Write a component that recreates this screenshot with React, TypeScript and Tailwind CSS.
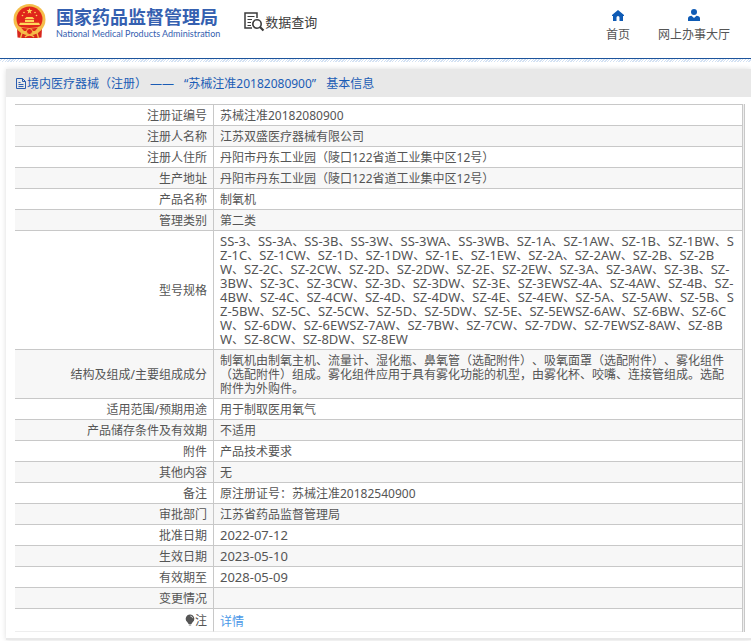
import { Fragment } from 'react';
import type { ReactNode } from 'react';

interface InfoRow {
  label: string;
  value: ReactNode;
}

const MODELS = [
  'SS-3、SS-3A、SS-3B、SS-3W、SS-3WA、SS-3WB、SZ-1A、SZ-1AW、SZ-1B、SZ-1BW、S',
  'Z-1C、SZ-1CW、SZ-1D、SZ-1DW、SZ-1E、SZ-1EW、SZ-2A、SZ-2AW、SZ-2B、SZ-2B',
  'W、SZ-2C、SZ-2CW、SZ-2D、SZ-2DW、SZ-2E、SZ-2EW、SZ-3A、SZ-3AW、SZ-3B、SZ-',
  '3BW、SZ-3C、SZ-3CW、SZ-3D、SZ-3DW、SZ-3E、SZ-3EWSZ-4A、SZ-4AW、SZ-4B、SZ-',
  '4BW、SZ-4C、SZ-4CW、SZ-4D、SZ-4DW、SZ-4E、SZ-4EW、SZ-5A、SZ-5AW、SZ-5B、S',
  'Z-5BW、SZ-5C、SZ-5CW、SZ-5D、SZ-5DW、SZ-5E、SZ-5EWSZ-6AW、SZ-6BW、SZ-6C',
  'W、SZ-6DW、SZ-6EWSZ-7AW、SZ-7BW、SZ-7CW、SZ-7DW、SZ-7EWSZ-8AW、SZ-8B',
  'W、SZ-8CW、SZ-8DW、SZ-8EW',
].join('\n');

const STRUCTURE = [
  '制氧机由制氧主机、流量计、湿化瓶、鼻氧管（选配附件）、吸氧面罩（选配附件）、雾化组件',
  '（选配附件）组成。雾化组件应用于具有雾化功能的机型，由雾化杯、咬嘴、连接管组成。选配',
  '附件为外购件。',
].join('\n');

// codes are set one step larger than the Chinese separators
function ModelList({ text }: { text: string }) {
  return (
    <div className="-mt-px pb-px text-[13px] leading-[14px] whitespace-pre">
      {text.split('、').map((code, i) => (
        <Fragment key={i}>
          {i > 0 && <span className="text-xs leading-none">、</span>}
          {code}
        </Fragment>
      ))}
    </div>
  );
}

function DateText({ children }: { children: string }) {
  return <div className="-mt-px pb-px text-[13px] leading-[14px]">{children}</div>;
}

function BulbIcon() {
  return (
    <svg viewBox="0 0 10 12" className="inline-block h-3 w-2.5 align-[-1px]" aria-hidden="true">
      <path d="M5 .5a4.300 4.300 0 0 0-2.600 7.700L3.600 10h2.800l1.200-1.800A4.300 4.300 0 0 0 5 .5Z" fill="#555" />
      <path d="M3.800 10.500h2.400v1H3.800z" fill="#777" />
      <path d="M5.400 2.100c1.300.1 2 .9 2.100 2" fill="none" stroke="#fff" strokeWidth=".8" />
    </svg>
  );
}

const ROWS: InfoRow[] = [
  { label: '注册证编号', value: '苏械注准20182080900' },
  { label: '注册人名称', value: '江苏双盛医疗器械有限公司' },
  { label: '注册人住所', value: '丹阳市丹东工业园（陵口122省道工业集中区12号）' },
  { label: '生产地址', value: '丹阳市丹东工业园（陵口122省道工业集中区12号）' },
  { label: '产品名称', value: '制氧机' },
  { label: '管理类别', value: '第二类' },
  { label: '型号规格', value: <ModelList text={MODELS} /> },
  { label: '结构及组成/主要组成成分', value: <div className="whitespace-pre">{STRUCTURE}</div> },
  { label: '适用范围/预期用途', value: '用于制取医用氧气' },
  { label: '产品储存条件及有效期', value: '不适用' },
  { label: '附件', value: '产品技术要求' },
  { label: '其他内容', value: '无' },
  { label: '备注', value: '原注册证号：苏械注准20182540900' },
  { label: '审批部门', value: '江苏省药品监督管理局' },
  { label: '批准日期', value: <DateText>2022-07-12</DateText> },
  { label: '生效日期', value: <DateText>2023-05-10</DateText> },
  { label: '有效期至', value: <DateText>2028-05-09</DateText> },
  { label: '变更情况', value: '' },
];

function Emblem() {
  return (
    <svg viewBox="0 0 33 35" className="h-[35px] w-[33px]" aria-hidden="true">
      <path d="M4 24 4.500 33.500l5 .5h14l5-.5L29 24z" fill="#d8261c" />
      <ellipse cx="16.500" cy="15.500" rx="16" ry="15.500" fill="#f5bd4a" />
      <ellipse cx="16.500" cy="15" rx="13" ry="12.500" fill="#e0261b" />
      <path d="m16.500 4 .8 2.100h2.200l-1.800 1.400.7 2.200-1.900-1.300-1.900 1.300.7-2.200-1.800-1.400h2.200z" fill="#ffd75a" />
      <g fill="#ffd75a">
        <circle cx="11" cy="8.500" r=".8" />
        <circle cx="22" cy="8.500" r=".8" />
        <circle cx="9.500" cy="11.500" r=".8" />
        <circle cx="23.500" cy="11.500" r=".8" />
        <path d="m11.500 15 2-2h6l2 2zM12 15.700h9v2.300h-9zM7 18.700h19l1 2.300H6z" />
      </g>
      <path d="M5 22c6 2.500 17 2.500 23 0l-2 6c-5 4-14 4-19 0z" fill="#f5bd4a" />
      <path d="M8 23.500c5 1.500 12 1.500 17 0l-3 3.500H11z" fill="#e0261b" />
      <circle cx="16.500" cy="27.500" r="3" fill="#e0261b" stroke="#f5bd4a" />
      <path d="m9 29-1.500 5M24 29l1.500 5M12 33c2-2.500 7-2.500 9 0" stroke="#f5bd4a" strokeWidth="1.300" fill="none" />
    </svg>
  );
}

function QueryIcon() {
  return (
    <svg viewBox="0 0 21 20" className="h-5 w-[21px]" fill="none" stroke="#3c3c3c" aria-hidden="true">
      <path d="M8 16H1V1h12v5" strokeWidth="1.500" />
      <path d="M3.500 4.500h7M3.500 7.500H8M3.500 10.500H7M3.500 13.500H7" />
      <circle cx="13" cy="12" r="4.200" strokeWidth="1.600" />
      <path d="m16 15 3.500 3.500" strokeWidth="2.200" />
    </svg>
  );
}

function HomeIcon() {
  return (
    <svg viewBox="0 0 12 11" className="h-[11px] w-3" fill="#0f5bb5" aria-hidden="true">
      <path d="M6 0 0 5v1h1v5h3.500V7.500a1.500 1.500 0 0 1 3 0V11H11V6h1V5z" />
    </svg>
  );
}

function UserIcon() {
  return (
    <svg viewBox="0 0 12 12" className="h-3 w-3" fill="#0f5bb5" aria-hidden="true">
      <circle cx="6" cy="3" r="3" />
      <path d="M0 12V9.500C0 7.800 1.500 7 3.500 6.800L6 9l2.500-2.200C10.500 7 12 7.800 12 9.500V12z" />
    </svg>
  );
}

function FileIcon() {
  return (
    <svg viewBox="0 0 11 12" className="h-3 w-[11px]" fill="none" stroke="#2a5db0" aria-hidden="true">
      <path d="M.5.5h6l3 3v7h-9zM6.500.5v3h3M2.500 4.500h2M2.500 6.500h5M2.500 8.500h5" />
    </svg>
  );
}

export default function App() {
  return (
    <div className="bg-white pb-0.5 font-['Noto_Sans','Noto_Sans_CJK_SC',sans-serif] text-xs text-[#555] [text-spacing-trim:space-all]">
      <header className="flex h-[59px] items-start justify-between border-b border-[#1d549c] pr-[21px] pl-[13px]">
        <div className="flex items-start">
          <a href="#" className="flex pt-1">
            <Emblem />
            <span className="ml-2.5 flex flex-col pt-0.5 text-[#3560b0]">
              <span className="text-[18px] leading-[22px] font-bold">国家药品监督管理局</span>
              <span className="font-['Lato',sans-serif] text-[9px] leading-3">National Medical Products Administration</span>
            </span>
          </a>
          <a href="#" className="ml-6 flex items-center pt-3 text-[#3c3c3c]">
            <QueryIcon />
            <span className="text-[13px] leading-5">数据查询</span>
          </a>
        </div>
        <nav className="flex gap-7 pt-[9px]">
          <a href="#" className="flex flex-col items-center">
            <span className="flex h-3 items-end"><HomeIcon /></span>
            <span className="mt-1 leading-5">首页</span>
          </a>
          <a href="#" className="flex flex-col items-center">
            <span className="flex h-3 items-end"><UserIcon /></span>
            <span className="mt-1 leading-5">网上办事大厅</span>
          </a>
        </nav>
      </header>
      <div className="h-[3px] bg-[repeating-linear-gradient(135deg,#fff_0_1px,#d3e1f3_1px_2px)]" />

      <main className="mt-[7px] ml-1.5 border-b-2 border-[#e8e8e8] shadow-[0_0_5px_#ddd]">
        <h1 className="flex h-7 items-center bg-[#e8e8e8] pt-0.5 pl-2.5 text-[#1b5cb5]">
          <FileIcon />
          <span>境内医疗器械（注册）</span>
          <span className="ml-[3px]">——</span>
          <span className="mx-2.5">“苏械注准20182080900”</span>
          <span>基本信息</span>
        </h1>
        <div className="mt-[7px] mr-1.5 mb-1.5 ml-[9px] border-r border-[#c8c8c8] bg-[#eee] pr-px">
          <table className="w-full table-fixed border-separate border-spacing-0 border-t border-r border-[#c8c8c8] bg-white leading-[14px]">
            <colgroup>
              <col className="w-[199px]" />
              <col />
            </colgroup>
            <tbody>
              {ROWS.map((row) => (
                <tr key={row.label} className="even:bg-[#f7f7f7]">
                  <th scope="row" className="border-r border-b border-[#c8c8c8] pt-1 pr-1.5 pb-0.5 text-right font-normal">{row.label}</th>
                  <td className="h-[21px] border-b border-[#c8c8c8] pt-1 pb-0.5 pl-1.5">{row.value}</td>
                </tr>
              ))}
              <tr>
                <th scope="row" className="border-r border-b border-r-[#c8c8c8] border-b-[#eee] pt-[5px] pr-1.5 pb-[3px] text-right font-normal">
                  <BulbIcon />注
                </th>
                <td className="border-b border-[#eee] pt-1.5 pb-0.5 pl-1.5">
                  <a href="#" className="text-[#4a98e8]">详情</a>
                </td>
              </tr>
            </tbody>
          </table>
        </div>
      </main>
    </div>
  );
}
